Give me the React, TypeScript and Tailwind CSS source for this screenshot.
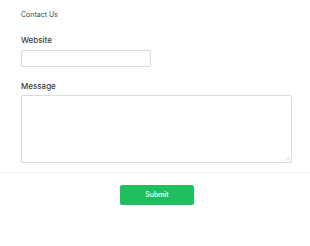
export default function App() {
    return (
        <div className="w-[310px] h-[246px] bg-white font-['Inter','Liberation_Sans',sans-serif]">
            <div className="px-[21px] pt-[10px]">
                {/* Title */}
                <p className="text-[7px] leading-[10px] text-[#444]">Contact Us</p>

                {/* Website */}
                <label className="block mt-[15px] text-[8px] leading-[10px] font-medium text-[#3b3b3b]">
                    Website
                </label>
                <input
                    type="text"
                    className="block mt-[5px] w-[130px] h-[17px] border border-[#d8dbe0] rounded-[2px] outline-none"
                />

                {/* Message */}
                <label className="block mt-[14px] text-[8px] leading-[10px] font-medium text-[#3b3b3b]">
                    Message
                </label>
                <div className="relative mt-[4px] w-[271px]">
                    <textarea className="block w-[271px] h-[68px] border border-[#d8dbe0] rounded-[2px] outline-none resize-none" />
                    {/* small resize grip */}
                    <svg
                        className="absolute right-[2px] bottom-[2px]"
                        width="5"
                        height="5"
                        viewBox="0 0 5 5"
                    >
                        <path d="M4.5 1 L1 4.5 M4.5 3 L3 4.5" stroke="#b8bcc4" strokeWidth="0.6" />
                    </svg>
                </div>
            </div>

            <div className="mt-[9px] border-t border-gray-100" />

            {/* Actions */}
            <div className="flex justify-center pt-[12px] pl-[4px]">
                <button
                    type="button"
                    className="w-[74px] h-[20px] rounded-[2px] bg-[#1fbf5f] text-white text-[7px] font-medium"
                >
                    Submit
                </button>
            </div>
        </div>
    );
}
